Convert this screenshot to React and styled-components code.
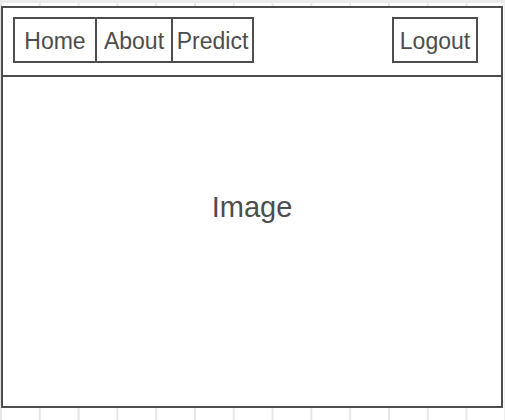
import React from "react";
import styled, { createGlobalStyle } from "styled-components";

const Global = createGlobalStyle`
  html, body { margin: 0; padding: 0; }
  body {
    width: 505px;
    height: 420px;
    overflow: hidden;
    background-color: #fff;
    background-image:
      linear-gradient(to bottom, #ebebeb 3px, transparent 3px),
      linear-gradient(to right, #e6e6e6 2px, transparent 2px);
    background-size: 100% 100%, 38.8px 100%;
    background-repeat: no-repeat, repeat-x;
    background-position: 0 0, 0 0;
    font-family: "Liberation Sans", Arial, sans-serif;
    color: #4d4d4d;
  }
`;

const Page = styled.div`
  padding: 6px 0 0 1px;
`;

const Frame = styled.div`
  box-sizing: border-box;
  width: 502px;
  height: 402px;
  border: 2px solid #4d4d4d;
  background: #fff;
  display: flex;
  flex-direction: column;
`;

const Header = styled.div`
  box-sizing: border-box;
  height: 69px;
  border-bottom: 2px solid #4d4d4d;
  display: flex;
  align-items: flex-start;
  justify-content: space-between;
  padding: 9px 23px 0 10px;
`;

const Nav = styled.div`
  display: flex;
`;

const NavButton = styled.div`
  box-sizing: border-box;
  height: 46px;
  width: ${(p) => p.$w}px;
  border: 2px solid #4d4d4d;
  margin-left: ${(p) => (p.$first ? 0 : -2)}px;
  padding-top: 3px;
  display: flex;
  align-items: center;
  justify-content: center;
  font-size: 23px;
  color: #4d4d4d;
  white-space: nowrap;
`;

const Body = styled.div`
  flex: 1;
  display: flex;
  align-items: center;
  justify-content: center;
  padding-bottom: 69px;
  font-size: 29px;
  color: #4d4d4d;
`;

export default function App() {
  return (
    <>
      <Global />
      <Page>
        <Frame>
          <Header>
            <Nav>
              <NavButton $first $w={84}>Home</NavButton>
              <NavButton $w={78}>About</NavButton>
              <NavButton $w={83}>Predict</NavButton>
            </Nav>
            <NavButton $first $w={86}>Logout</NavButton>
          </Header>
          <Body>Image</Body>
        </Frame>
      </Page>
    </>
  );
}
